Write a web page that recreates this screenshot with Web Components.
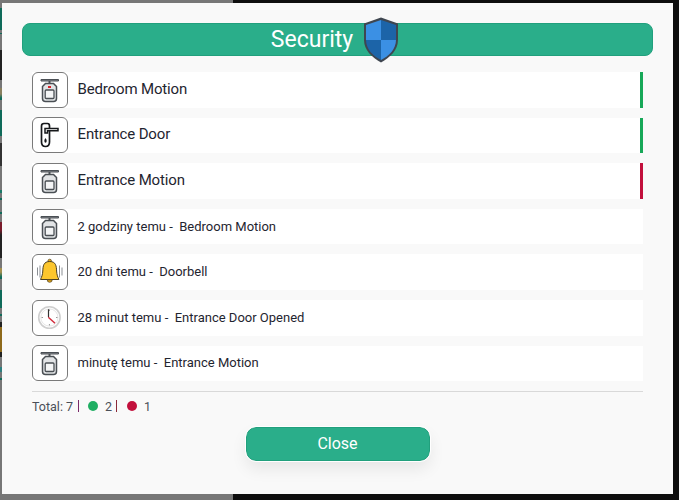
<!DOCTYPE html>
<html>
<head>
<meta charset="utf-8">
<title>Security</title>
<style>
  html, body { margin: 0; height: 100%; overflow: hidden; }
  body {
    box-sizing: border-box;
    padding: 3px 6px 6px 2px;
    font-family: Roboto, sans-serif;
    color: #1f2530;
    background:
      linear-gradient(#777 0 8px, #0f6b5a 8px 30px, #777 30px 33px, #0f6b5a 33px 34px, #777 34px 50px, #222 50px 80px, #777 80px 88px, #8a8060 88px 94px, #0f6b5a 98px 100px, #777 100px 110px, #0f6b5a 110px 136px, #777 136px 143px, #333 143px 166px, #777 166px 190px, #1b7a68 190px 193px, #777 193px 198px, #0f6b5a 198px 200px, #777 200px 212px, #0f6b5a 212px 214px, #777 214px 222px, #7a1b2b 222px 230px, #222 235px 258px, #777 258px 268px, #a38f50 268px 272px, #0f6b5a 277px 279px, #777 279px 290px, #0f6b5a 290px 308px, #777 308px 314px, #0f6b5a 314px 316px, #777 316px 322px, #222 322px 327px, #8f6a1c 327px 352px, #222 352px 357px, #777 357px 367px, #2d7f80 367px 372px, #777 372px 378px, #0f6b5a 378px 380px, #777 380px) left top / 2px 100% no-repeat,
      linear-gradient(90deg, #777 0 233px, #0e0e0e 233px);
  }
</style>
</head>
<body>
<template id="sensor-art">
  <svg viewBox="0 0 36 36" width="36" height="36" fill="none" stroke="#4a4f54">
    <path d="M9 7.500h17.500v1.500h-17.500z" stroke-width="1" fill="#8a8e92"/>
    <path d="M17.500 9v2.500" stroke-width="2"/>
    <path d="M13.500 11.500h8l3 3v12q0 3 -3 3h-8q-3 0 -3 -3v-12z" stroke-width="1.500" fill="#e2e4e6"/>
    <rect x="13.200" y="18" width="8.800" height="8.500" rx="1" stroke-width="1.300" fill="#f4f5f6"/>
  </svg>
</template>

<sec-dialog>
  <sec-header>Security</sec-header>
  <sec-row icon="sensor-dot" bar="#17a858">Bedroom Motion</sec-row>
  <sec-row icon="door" bar="#17a858">Entrance Door</sec-row>
  <sec-row icon="sensor" bar="#c2103c">Entrance Motion</sec-row>
  <sec-row icon="sensor" small><span>2 godziny temu -&nbsp;</span> Bedroom Motion</sec-row>
  <sec-row icon="bell" small><span>20 dni temu -&nbsp;</span> Doorbell</sec-row>
  <sec-row icon="clock" small><span>28 minut temu -&nbsp;</span> Entrance Door Opened</sec-row>
  <sec-row icon="sensor" small><span>minutę temu -&nbsp;</span> Entrance Motion</sec-row>
  <sec-totals total="7" on="2" off="1"></sec-totals>
  <sec-button>Close</sec-button>
</sec-dialog>

<script>
class SecDialog extends HTMLElement {
  connectedCallback() {
    this.attachShadow({ mode: 'open' });
    this.shadowRoot.innerHTML = `
      <style>
        :host {
          display: flex;
          flex-direction: column;
          box-sizing: border-box;
          height: 491px;
          padding: 20px 20px 0;
          background: #f9f9f9;
        }
      </style>
      <slot></slot>
    `;
  }
}
customElements.define('sec-dialog', SecDialog);

class SecHeader extends HTMLElement {
  connectedCallback() {
    this.attachShadow({ mode: 'open' });
    this.shadowRoot.innerHTML = `
      <style>
        :host {
          display: flex;
          justify-content: center;
          align-items: center;
          gap: 10px;
          box-sizing: border-box;
          height: 33px;
          margin-bottom: 16px;
          padding-right: 5px;
          background: #2aae8a;
          border: 1px solid #21a07d;
          border-radius: 8px;
          color: #fff;
          font-size: 23px;
        }
        svg { flex: none; margin: 0 0 -1px; }
      </style>
      <slot></slot>
      <svg width="36" height="46" viewBox="0 0 36 46" overflow="visible">
        <path d="M18 .500 L35 6.500 V23 C35 33 27 40.500 18 45.500 C9 40.500 1 33 1 23 V6.500 Z" fill="#3f4650"/>
        <path d="M18 3 L18 23 L3 23 V8 Z" fill="#3b90e4"/>
        <path d="M18 3 L33 8 V23 L18 23 Z" fill="#1c64a8"/>
        <path d="M3 23 H18 V43 C10 39 3 32 3 23 Z" fill="#1c64a8"/>
        <path d="M18 23 H33 C33 32 26 39 18 43 Z" fill="#3b90e4"/>
      </svg>
    `;
  }
}
customElements.define('sec-header', SecHeader);

class SecIcon extends HTMLElement {
  connectedCallback() {
    this.attachShadow({ mode: 'open' });
    const name = this.getAttribute('name');
    const art = {
      sensor: document.getElementById('sensor-art').innerHTML,
      'sensor-dot': document.getElementById('sensor-art').innerHTML.replace('</svg>',
        '<rect x="16" y="14" width="3" height="2" fill="#d8232a" stroke="none"/></svg>'),
      door: `<svg viewBox="0 0 36 36" width="36" height="36" fill="none" stroke="#16181b" stroke-width="1.500">
          <path d="M9.500 9 Q9.500 6.500 12 6.500 H15.500 Q17.500 6.500 17.500 9 V25 Q17.500 29.500 13.500 29.500 Q9.500 29.500 9.500 25 Z" fill="#fff" stroke-width="1.700"/>
          <path d="M13 11.500 H26 V13.800 H15.500 V16 H13 Z" fill="#fff"/>
          <path d="M13.500 21 q2 2.500 1 4 q-1 1.500 -2 0 q-1 -1.500 1 -4 Z" fill="#16181b" stroke="none"/>
        </svg>`,
      bell: `<svg viewBox="0 0 36 36" width="36" height="36">
          <path d="M5.500 13.500 v8 M8 11.500 v12 M27.500 11.500 v12 M30 13.500 v8" stroke="#8b8f94" stroke-width="1" fill="none"/>
          <circle cx="17.700" cy="7" r="1.800" fill="#e6a817" stroke="#5a4c28" stroke-width=".7"/>
          <path d="M17.700 7.500 C11.500 7.500 11 12 10.800 17 C10.600 21 9.600 23 8.500 25.500 H26.900 C25.800 23 24.800 21 24.600 17 C24.400 12 23.900 7.500 17.700 7.500 Z" fill="#fcc62d" stroke="#4a3f22" stroke-width="1"/>
          <path d="M15.200 25.800 a2.500 2.500 0 0 0 5 0 Z" fill="#e6a817" stroke="#4a3f22" stroke-width=".7"/>
        </svg>`,
      clock: `<svg viewBox="0 0 36 36" width="36" height="36" fill="none">
          <circle cx="17.400" cy="17.500" r="10.700" fill="#fff" stroke="#cfcfcf" stroke-width="1.600"/>
          <circle cx="17.400" cy="17.500" r="8.600" fill="#fff" stroke="#dfdfdf" stroke-width=".8"/>
          <path d="M17.400 9.500v1.500M17.400 24v1.500M9.500 17.500h1.500M24 17.500h1.500" stroke="#999" stroke-width="1"/>
          <path d="M16.500 17.300V9.300" stroke="#333" stroke-width="1.200"/>
          <path d="M16.300 17.300 L23 23.300" stroke="#d22d3d" stroke-width="1.500"/>
        </svg>`
    };
    this.shadowRoot.innerHTML = `
      <style>
        :host {
          display: block;
          flex: none;
          box-sizing: border-box;
          width: 35.500px;
          height: 36px;
          background: #fff;
          border: 1px solid #7a7a7a;
          border-radius: 6px;
          overflow: hidden;
        }
        svg { display: block; margin: -1px; }
      </style>
      ${art[name]}
    `;
  }
}
customElements.define('sec-icon', SecIcon);

class SecRow extends HTMLElement {
  connectedCallback() {
    this.attachShadow({ mode: 'open' });
    const bar = this.getAttribute('bar');
    this.shadowRoot.innerHTML = `
      <style>
        :host {
          display: flex;
          align-items: center;
          gap: 10px;
          height: 35.600px;
          margin: 0 10px 10px;
          background: #fff;
          border-right: 3px solid ${bar || '#fff'};
          font-size: 15px;
          letter-spacing: -0.15px;
          color: #1f2530;
        }
        :host([small]) { font-size: 13px; letter-spacing: 0; }
        div { padding-bottom: 2px; }
        :host([small]) div { padding-bottom: 1px; }
      </style>
      <sec-icon name="${this.getAttribute('icon')}"></sec-icon>
      <div><slot></slot></div>
    `;
  }
}
customElements.define('sec-row', SecRow);

class SecTotals extends HTMLElement {
  connectedCallback() {
    this.attachShadow({ mode: 'open' });
    this.shadowRoot.innerHTML = `
      <style>
        :host {
          display: flex;
          align-items: center;
          height: 30px;
          padding-bottom: 1px;
          box-sizing: border-box;
          margin: 0 10px;
          border-top: 1px solid #d9d9d9;
          font-size: 12.500px;
          color: #4a4f58;
        }
        .sep { width: 1px; height: 12px; margin: 0 9px 0 5px; background: #7a2a6a; }
        .sep.red { background: #8a2a3a; margin: 0 10px 0 4px; }
        .dot { width: 10px; height: 10px; border-radius: 50%; margin-right: 7px; }
      </style>
      <span>Total: ${this.getAttribute('total')}</span><span class="sep"></span>
      <span class="dot" style="background:#1fae62"></span><span>${this.getAttribute('on')}</span><span class="sep red"></span>
      <span class="dot" style="background:#c2103c"></span><span>${this.getAttribute('off')}</span>
    `;
  }
}
customElements.define('sec-totals', SecTotals);

class SecButton extends HTMLElement {
  connectedCallback() {
    this.attachShadow({ mode: 'open' });
    this.shadowRoot.innerHTML = `
      <style>
        :host {
          display: block;
          align-self: center;
          margin-top: 6px;
        }
        button {
          display: block;
          box-sizing: border-box;
          width: 184px;
          height: 34px;
          padding: 0 0 2px;
          background: #2aae8a;
          border: 1px solid #21a07d;
          outline: 1px solid #fff;
          border-radius: 10px;
          box-shadow: 0 8px 16px rgba(0, 0, 0, 0.08);
          color: #fff;
          font: 16px Roboto, sans-serif;
        }
      </style>
      <button><slot></slot></button>
    `;
  }
}
customElements.define('sec-button', SecButton);
</script>
</body>
</html>
